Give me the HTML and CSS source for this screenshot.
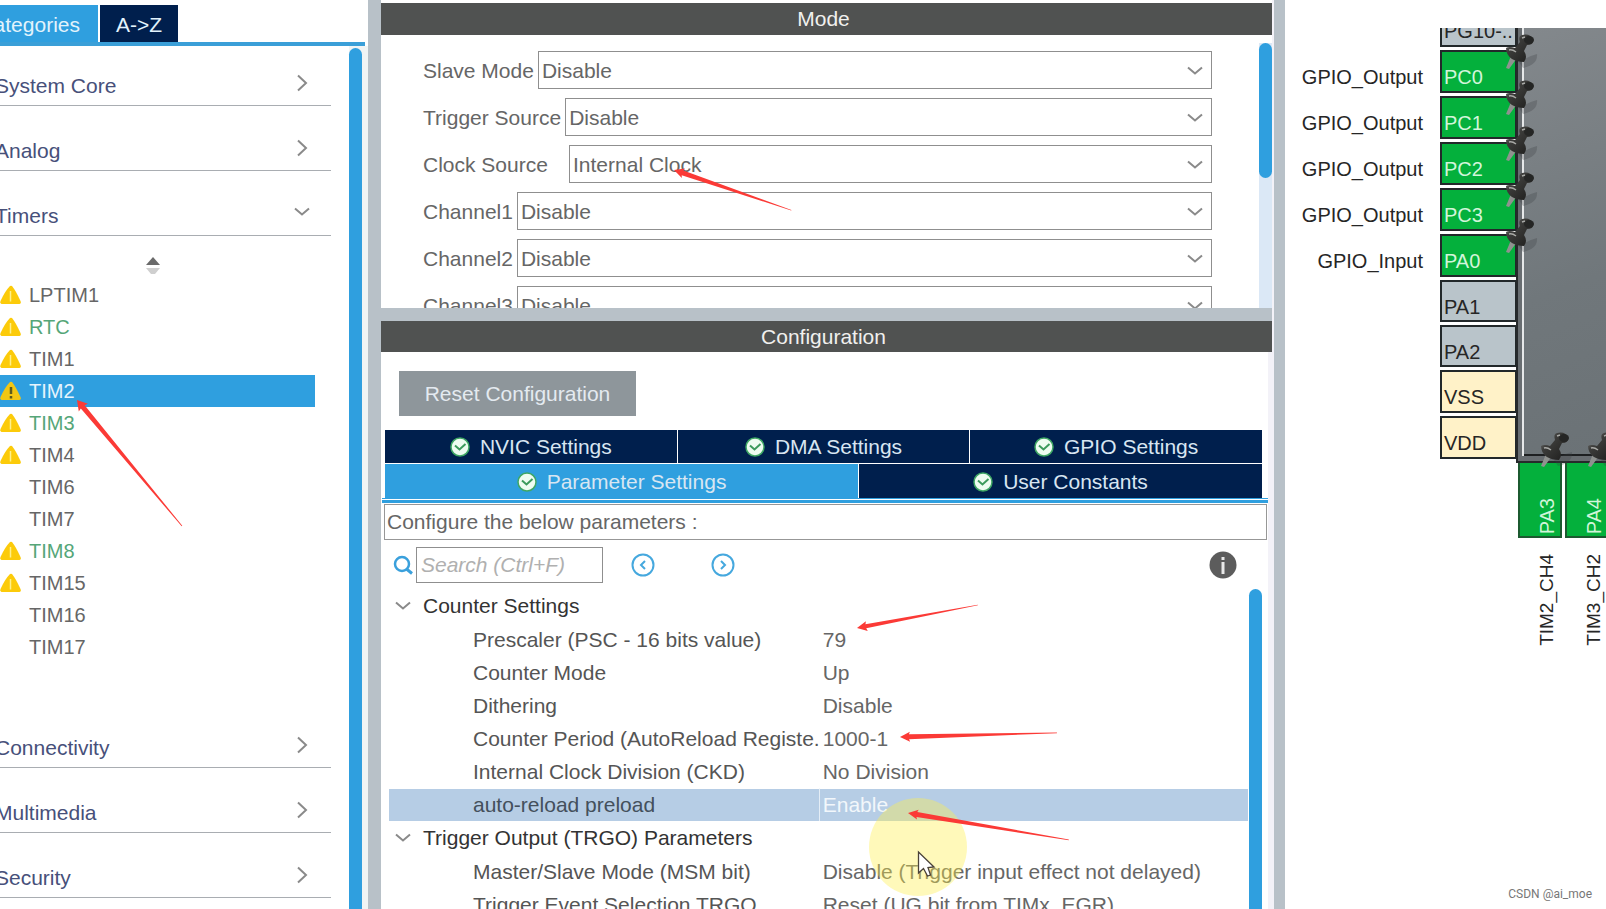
FILE: index.html
```html
<!DOCTYPE html>
<html lang="en">
<head>
<meta charset="utf-8">
<title>TIM2 Mode and Configuration</title>
<link rel="stylesheet" href="styles.css">
</head>
<body>
<svg class="defs" width="0" height="0" aria-hidden="true">
  <defs>
    <linearGradient id="pinHead" x1="0" y1="0" x2="1" y2="1">
      <stop offset="0" stop-color="#8a8a88"/><stop offset=".35" stop-color="#3c3c3a"/><stop offset="1" stop-color="#1c1c1b"/>
    </linearGradient>
    <symbol id="down" viewBox="0 0 18 12"><path d="M2 2.500L9 8.500L16 2.500" fill="none" stroke="#8a8a8a" stroke-width="2"/></symbol>
    <symbol id="right" viewBox="0 0 12 18"><path d="M2 1.500L10 9L2 16.500" fill="none" stroke="#8a8a8a" stroke-width="2"/></symbol>
    <symbol id="warn" viewBox="0 0 22 20"><path d="M10 1Q11 .4 12 1Q16 6 20.500 16Q21.500 18.500 19.500 19H1.500Q-.3 18.500 .5 16Q5 6 10 1Z" fill="#fccb0a"/><path d="M10.500 6V16.500" stroke="#fff08a" stroke-width="1.500"/></symbol>
    <symbol id="warn-dark" viewBox="0 0 22 20"><path d="M10 1Q11 .4 12 1Q16 6 20.500 16Q21.500 18.500 19.500 19H1.500Q-.3 18.500 .5 16Q5 6 10 1Z" fill="#f2c714"/><path d="M11 6V13M11 15V17.500" stroke="#5d5b1c" stroke-width="2.500"/></symbol>
    <symbol id="ok" viewBox="0 0 20 20"><circle cx="10" cy="10" r="9" fill="#eefcf1" stroke="#3fa765" stroke-width="1.500"/><path d="M5 8.500L9.500 12.500L15.500 7" fill="none" stroke="#3c9a5c" stroke-width="2"/></symbol>
    <symbol id="pushpin" viewBox="0 0 34 40">
      <path d="M14 30Q24 24 32 22Q33 33 18 36Z" fill="#3a3d3f" opacity=".28"/>
      <path d="M6 24L1 36L4 37L12 26Z" fill="#8f928f"/>
      <path d="M1 16Q4 14 10 16L15 10Q13 4 17 3Q25 1 28 7Q29 13 22 13L19 19Q23 25 19 30Q12 30 7 27Q1 23 1 16Z" fill="url(#pinHead)"/>
      <ellipse cx="24" cy="8" rx="5" ry="4" fill="#252625"/>
      <path d="M4 18Q7 17 11 20M17 6L20 5" stroke="#a9aaa7" stroke-width="1.500" fill="none"/>
    </symbol>
  </defs>
</svg>

<div class="app">
  <aside class="sidebar">
    <div class="view-tabs">
      <button class="view-tab active">Categories</button>
      <button class="view-tab dark">A-&gt;Z</button>
    </div>
    <div class="sidebar-body">
      <nav class="categories">
        <button class="category"><span>System Core</span><svg class="chev-r"><use href="#right"/></svg></button>
        <button class="category"><span>Analog</span><svg class="chev-r"><use href="#right"/></svg></button>
        <button class="category"><span>Timers</span><svg class="chev-d"><use href="#down"/></svg></button>
        <div class="timers">
          <svg class="sorter" viewBox="0 0 16 18"><path d="M8 0L15 8H1Z" fill="#6a6a6a"/><path d="M1 11H15L10 17H6Z" fill="#cfcfcf"/></svg>
          <ul class="periphs">
            <li><button class="periph"><svg><use href="#warn"/></svg>LPTIM1</button></li>
            <li><button class="periph used"><svg><use href="#warn"/></svg>RTC</button></li>
            <li><button class="periph"><svg><use href="#warn"/></svg>TIM1</button></li>
            <li><button class="periph selected"><svg><use href="#warn-dark"/></svg>TIM2</button></li>
            <li><button class="periph used"><svg><use href="#warn"/></svg>TIM3</button></li>
            <li><button class="periph"><svg><use href="#warn"/></svg>TIM4</button></li>
            <li><button class="periph"><svg></svg>TIM6</button></li>
            <li><button class="periph"><svg></svg>TIM7</button></li>
            <li><button class="periph used"><svg><use href="#warn"/></svg>TIM8</button></li>
            <li><button class="periph"><svg><use href="#warn"/></svg>TIM15</button></li>
            <li><button class="periph"><svg></svg>TIM16</button></li>
            <li><button class="periph"><svg></svg>TIM17</button></li>
          </ul>
        </div>
        <button class="category"><span>Connectivity</span><svg class="chev-r"><use href="#right"/></svg></button>
        <button class="category"><span>Multimedia</span><svg class="chev-r"><use href="#right"/></svg></button>
        <button class="category"><span>Security</span><svg class="chev-r"><use href="#right"/></svg></button>
      </nav>
      <div class="side-scroll"><div class="thumb"></div></div>
    </div>
  </aside>

  <main class="center">
    <section class="mode">
      <h2 class="bar">Mode</h2>
      <div class="mode-body">
        <div class="mode-rows">
          <div class="field"><label for="slave">Slave Mode</label><div class="combo"><select id="slave"><option>Disable</option></select><svg><use href="#down"/></svg></div></div>
          <div class="field"><label for="trig">Trigger Source</label><div class="combo"><select id="trig"><option>Disable</option></select><svg><use href="#down"/></svg></div></div>
          <div class="field"><label for="clock" class="wide">Clock Source</label><div class="combo"><select id="clock"><option>Internal Clock</option></select><svg><use href="#down"/></svg></div></div>
          <div class="field"><label for="ch1">Channel1</label><div class="combo"><select id="ch1"><option>Disable</option></select><svg><use href="#down"/></svg></div></div>
          <div class="field"><label for="ch2">Channel2</label><div class="combo"><select id="ch2"><option>Disable</option></select><svg><use href="#down"/></svg></div></div>
          <div class="field"><label for="ch3">Channel3</label><div class="combo"><select id="ch3"><option>Disable</option></select><svg><use href="#down"/></svg></div></div>
        </div>
        <div class="mode-scroll"><div class="thumb"></div></div>
      </div>
    </section>

    <section class="config">
      <h2 class="bar">Configuration</h2>
      <div class="config-body">
        <button class="reset">Reset Configuration</button>
        <div class="tabs">
          <div class="tab-row three">
            <button class="tab"><svg><use href="#ok"/></svg>NVIC Settings</button>
            <button class="tab"><svg><use href="#ok"/></svg>DMA Settings</button>
            <button class="tab"><svg><use href="#ok"/></svg>GPIO Settings</button>
          </div>
          <div class="tab-row two">
            <button class="tab active"><svg><use href="#ok"/></svg>Parameter Settings</button>
            <button class="tab"><svg><use href="#ok"/></svg>User Constants</button>
          </div>
        </div>
        <div class="tab-line"></div>
        <p class="hint">Configure the below parameters :</p>
        <div class="search">
          <label for="find" aria-label="Search"><svg class="lens" viewBox="0 0 20 20"><circle cx="9" cy="9" r="7" fill="none" stroke="#3aa0dc" stroke-width="2.500"/><path d="M13.500 14L19 18.500" stroke="#3aa0dc" stroke-width="3"/></svg></label>
          <input id="find" type="text" placeholder="Search (Ctrl+F)">
          <button class="step" aria-label="Previous"><svg viewBox="0 0 24 24"><circle cx="12" cy="12" r="10.500"/><path d="M14 8L10 12L14 16"/></svg></button>
          <button class="step next" aria-label="Next"><svg viewBox="0 0 24 24"><circle cx="12" cy="12" r="10.500"/><path d="M10 8L14 12L10 16"/></svg></button>
          <button class="info" aria-label="Information"><svg viewBox="0 0 28 28"><circle cx="14" cy="14" r="13.500" fill="#5c5c5c"/><path d="M14 6V9M14 11V23" stroke="#e8e8e8" stroke-width="3"/></svg></button>
        </div>
        <div class="params">
          <table class="tree">
            <colgroup><col class="name-col"><col></colgroup>
            <tbody>
              <tr class="group"><th colspan="2"><svg><use href="#down"/></svg>Counter Settings</th></tr>
              <tr><td>Prescaler (PSC - 16 bits value)</td><td>79</td></tr>
              <tr><td>Counter Mode</td><td>Up</td></tr>
              <tr><td>Dithering</td><td>Disable</td></tr>
              <tr><td>Counter Period (AutoReload Registe.</td><td>1000-1</td></tr>
              <tr><td>Internal Clock Division (CKD)</td><td>No Division</td></tr>
              <tr class="current"><td>auto-reload preload</td><td>Enable</td></tr>
              <tr class="group"><th colspan="2"><svg><use href="#down"/></svg>Trigger Output (TRGO) Parameters</th></tr>
              <tr><td>Master/Slave Mode (MSM bit)</td><td>Disable (Trigger input effect not delayed)</td></tr>
              <tr><td>Trigger Event Selection TRGO</td><td>Reset (UG bit from TIMx_EGR)</td></tr>
            </tbody>
          </table>
          <div class="param-scroll"></div>
        </div>
      </div>
    </section>
  </main>

  <section class="pinout">
    <div class="left-pins">
      <div class="pin-row"><span class="signal"></span><span class="pin">PG10-..</span></div>
      <div class="pin-row"><span class="signal">GPIO_Output</span><span class="pin on">PC0<svg class="pushpin"><use href="#pushpin"/></svg></span></div>
      <div class="pin-row"><span class="signal">GPIO_Output</span><span class="pin on">PC1<svg class="pushpin"><use href="#pushpin"/></svg></span></div>
      <div class="pin-row"><span class="signal">GPIO_Output</span><span class="pin on">PC2<svg class="pushpin"><use href="#pushpin"/></svg></span></div>
      <div class="pin-row"><span class="signal">GPIO_Output</span><span class="pin on">PC3<svg class="pushpin"><use href="#pushpin"/></svg></span></div>
      <div class="pin-row"><span class="signal">GPIO_Input</span><span class="pin on">PA0<svg class="pushpin"><use href="#pushpin"/></svg></span></div>
      <div class="pin-row idle"><span class="signal"></span><span class="pin">PA1</span></div>
      <div class="pin-row idle"><span class="signal"></span><span class="pin">PA2</span></div>
      <div class="pin-row"><span class="signal"></span><span class="pin power">VSS</span></div>
      <div class="pin-row"><span class="signal"></span><span class="pin power">VDD</span></div>
    </div>
    <div class="chip-side">
      <div class="chip"><div class="die"></div></div>
      <div class="bottom-pins">
        <div class="pin-col"><span class="pin on">PA3<svg class="pushpin"><use href="#pushpin"/></svg></span><span class="signal">TIM2_CH4</span></div>
        <div class="pin-col"><span class="pin on">PA4<svg class="pushpin"><use href="#pushpin"/></svg></span><span class="signal">TIM3_CH2</span></div>
      </div>
    </div>
  </section>
</div>

<svg class="marks" width="1606" height="909" viewBox="0 0 1606 909" aria-hidden="true">
  <circle cx="918" cy="847" r="49" fill="#fff04a" opacity=".38"/>
  <g fill="#fb3a36">
    <path transform="translate(77 400) rotate(50.200)" d="M0 0L10 -6L9 -2.500L164 -.4V.4L9 2.500L10 6Z"/>
    <path transform="translate(674 170) rotate(18.900)" d="M0 0L10 -5L9 -2.500L124 -.3V.3L9 2.500L10 5Z"/>
    <path transform="translate(857 628) rotate(-10.800)" d="M0 0L10 -5L9 -2L123 -.3V.3L9 2L10 5Z"/>
    <path transform="translate(900 737) rotate(-1.500)" d="M0 0L10 -5L9 -2.500L157 -.3V.3L9 2.500L10 5Z"/>
    <path transform="translate(908 813) rotate(9.500)" d="M0 0L10 -5L9 -2.500L163 -.3V.3L9 2.500L10 5Z"/>
  </g>
  <path d="M918.500 852V873L923.500 868.500L927.500 876L930.500 875L928 867.500L934 867Z" fill="#fff" stroke="#4a4238" stroke-width="1.300"/>
</svg>
<div class="credit">CSDN @ai_moe</div>
</body>
</html>
```
FILE: styles.css
```css
* { box-sizing: border-box; }

body {
  margin: 0;
  background: #fff;
  color: #666;
  font: 21px/24px "Liberation Sans", Arial, sans-serif;
}

button, input, select { font: inherit; color: inherit; border: 0; border-radius: 0; padding: 0; margin: 0; background: none; }
svg { flex: none; }
.defs { position: absolute; }

.app {
  display: grid;
  grid-template-columns: 381px minmax(0, 1fr) 334px;
  height: 100vh;
  overflow: hidden;
}

/* Category sidebar */
.sidebar {
  display: flex;
  flex-direction: column;
  min-height: 0;
  padding-top: 5px;
  border-right: 13px solid #b8c1c8;
  overflow: hidden;
}
.view-tabs {
  display: flex;
  gap: 2px;
  height: 41px;
  margin-right: 3px;
  border-bottom: 4px solid #3a9fd8;
}
.view-tab { width: 78px; padding-top: 2px; color: #e2f3fc; background: #001f4d; white-space: nowrap; }
.view-tab.active { display: flex; justify-content: flex-end; align-items: center; width: 98px; padding-right: 18px; background: #2f9fdf; }
.sidebar-body { display: flex; flex: 1; min-height: 0; }
.categories { flex: 1; min-width: 0; padding-right: 18px; overflow: hidden; }
.category {
  display: flex;
  justify-content: space-between;
  align-items: flex-end;
  width: 100%;
  height: 65px;
  padding: 0 20px 7px 0;
  border-bottom: 1px solid #a9adb2;
  color: #47507a;
}
.category:first-child { height: 60px; }
.category span { margin-left: -5px; }
.category .chev-r { width: 12px; height: 18px; margin: 0 3px 6px 0; }
.category .chev-d { width: 18px; height: 12px; margin: 0 0 10px; }
.timers { height: 467px; padding-top: 21px; }
.sorter { display: block; width: 16px; height: 18px; margin: 0 auto 4px 145px; }
.periphs { margin: 0; padding: 0; list-style: none; font-size: 20px; }
.periph {
  display: flex;
  align-items: center;
  gap: 7px;
  width: calc(100% - 16px);
  height: 32px;
  color: #666;
}
.periph svg { width: 22px; height: 20px; }
.periph.used { color: #55a678; }
.periph.selected { color: #e6f4fd; background: #2f9fdf; }
.side-scroll { width: 19px; padding-top: 2px; background: #f0f4f4; }
.side-scroll .thumb { width: 13px; height: 100%; border-radius: 7px 7px 0 0; background: #2f9fdf; }

/* Centre column */
.center {
  display: grid;
  grid-template-rows: 308px minmax(0, 1fr);
  min-width: 0;
  min-height: 0;
}
.bar {
  flex: none;
  margin: 0;
  padding-right: 6px;
  background: #505251;
  color: #f0f0ee;
  font-size: 21px;
  font-weight: 400;
  line-height: 31px;
  text-align: center;
}
.mode {
  display: flex;
  flex-direction: column;
  min-height: 0;
  padding-top: 3px;
  overflow: hidden;
}
.mode .bar { line-height: 32px; }
.mode-body { display: flex; flex: 1; min-height: 0; }
.mode-rows {
  display: flex;
  flex-direction: column;
  flex: 1;
  gap: 9px;
  min-width: 0;
  padding: 16px 47px 0 42px;
  overflow: hidden;
}
.field { display: flex; flex: none; align-items: center; gap: 4px; height: 38px; }
.field label { flex: none; padding-top: 2px; white-space: nowrap; }
.field label.wide { min-width: 142px; }
.combo { position: relative; flex: 1; height: 38px; }
.combo select {
  appearance: none;
  width: 100%;
  height: 100%;
  padding: 2px 36px 0 3px;
  border: 1px solid #8f8f8f;
  background: #fff;
}
.combo svg { position: absolute; right: 8px; top: 14px; width: 18px; height: 12px; pointer-events: none; }
.mode-scroll { width: 13px; margin-top: 8px; background: #dbe8f6; }
.mode-scroll .thumb { height: 51%; border-radius: 7px; background: #2f9fdf; }

.config {
  display: flex;
  flex-direction: column;
  min-height: 0;
  border-top: 13px solid #b8c1c8;
}
.config-body {
  display: flex;
  flex-direction: column;
  flex: 1;
  min-height: 0;
  border-right: 4px solid #f3f2f8;
}
.reset {
  flex: none;
  width: 237px;
  height: 45px;
  margin: 19px 0 14px 18px;
  background: #8e969b;
  color: #e4eaf0;
}
.tabs { display: grid; gap: 1px; margin: 0 6px 0 4px; }
.tab-row { display: grid; gap: 1px; }
.tab-row.three { grid-template-columns: 1fr 1fr 1fr; }
.tab-row.two { grid-template-columns: 54fr 46fr; }
.tab {
  display: flex;
  justify-content: center;
  align-items: center;
  gap: 10px;
  height: 33px;
  padding-top: 1px;
  background: #001f4d;
  color: #d8e6f2;
}
.two .tab { height: 34px; }
.tab.active { background: #2f9fdf; }
.tab svg { width: 20px; height: 20px; }
.tab-line { flex: none; height: 5px; margin-left: 1px; border: solid #2f9fdf; border-width: 1px 0 3px; }
.hint {
  flex: none;
  height: 36px;
  margin: 1px 1px 0 3px;
  padding: 0 2px;
  border: 1px solid #979797;
  line-height: 34px;
}
.search { display: flex; flex: none; align-items: center; height: 36px; margin: 7px 0 6px 12px; }
.lens { display: block; width: 20px; height: 20px; margin-right: 3px; }
.search input { width: 187px; height: 36px; padding: 0 4px; border: 1px solid #8f8f8f; }
.search input::placeholder { color: #b0b0b0; font-style: italic; opacity: 1; }
.step { height: 24px; margin-left: 28px; }
.step.next { margin-left: 56px; }
.step svg { display: block; width: 24px; height: 24px; fill: none; stroke: #45a8de; stroke-width: 2; }
.info { margin: 0 31px 0 auto; }
.info svg { display: block; width: 28px; height: 28px; }

.params { display: flex; flex: 1; min-height: 0; margin: 0 6px 0 8px; overflow: hidden; }
.param-scroll { flex: none; width: 13px; height: 100%; border-radius: 7px 7px 0 0; background: #2f9fdf; }
.tree {
  flex: 1;
  min-width: 0;
  height: max-content;
  margin-right: 1px;
  table-layout: fixed;
  border-collapse: separate;
  border-spacing: 0;
  color: #666;
}
.name-col { width: 428px; }
.tree td { height: 33px; padding: 0 0 0 3px; border-top: 1px solid #fff; white-space: nowrap; line-height: 32px; }
.tree td:first-child { padding-left: 84px; color: #555; }
.tree .current td { background: #b6cde5; color: #f2f7fb; }
.tree .current td:first-child { border-right: 1px solid #e4edf6; color: #44505c; }
.tree th { height: 34px; padding: 0; color: #333; font-weight: 400; text-align: left; line-height: 33px; vertical-align: top; }
.tree th svg { width: 18px; height: 12px; margin: 0 11px 2px 5px; vertical-align: middle; }

/* Pinout canvas */
.pinout {
  display: flex;
  min-width: 0;
  padding-top: 28px;
  border-left: 2px solid #f3f2f8;
  box-shadow: inset 11px 0 #b8c1c8;
  color: #262626;
  font-size: 20px;
  overflow: hidden;
}
.left-pins { display: flex; flex: none; flex-direction: column; gap: 3px; width: 242px; }
.pin-row { display: flex; justify-content: flex-end; gap: 17px; height: 43px; }
.pin-row.idle { height: 42px; }
.pin-row:first-child { height: 19px; overflow: hidden; align-items: flex-end; }
.pin-row .signal { padding-top: 15px; }
.pin-row .pin {
  position: relative;
  width: 76px;
  height: 43px;
  padding: 13px 0 0 2px;
  border: 2px solid #22282a;
  border-right-width: 1px;
  background: #b9c4ca;
}
.pin-row.idle .pin { height: 42px; }
.pin-row .pin.power { background: #fff2c8; }
.pin-row .pin.on, .pin-col .pin.on { background: #04b03c; color: #d2f5da; }
.pushpin { position: absolute; z-index: 1; width: 34px; height: 40px; }
.pin-row .pushpin { left: 63px; top: -20px; }
.chip-side { flex: 1; min-width: 0; }
.chip { height: 435px; padding: 0 0 5px 4px; border: solid #26292b; border-width: 0 0 2px 2px; background: #686d71; }
.die {
  height: 100%;
  border: solid #e6e8e9;
  border-width: 0 0 0 2px;
  box-shadow: inset 0 -2px #1e2022;
  background: linear-gradient(160deg, #83888c, #70777b 60%, #6b7276);
}
.bottom-pins { display: flex; gap: 3px; padding-left: 2px; }
.pin-col { flex: none; width: 44px; }
.pin-col .pin, .pin-col .signal { writing-mode: sideways-lr; }
.pin-col .pin {
  position: relative;
  display: flex;
  justify-content: flex-start;
  align-items: flex-start;
  width: 44px;
  height: 75px;
  padding: 0 0 2px 15px;
  border: 2px solid #1c5a30;
  border-top: 0;
}
.pin-col .signal { display: block; height: 108px; padding: 0 0 0 17px; font-size: 19px; }
.pin-col .pushpin { left: 20px; top: -33px; }

/* Overlays */
.marks { position: absolute; left: 0; top: 0; z-index: 2; pointer-events: none; }
.credit { position: absolute; right: 14px; bottom: 6px; color: #777; font: 12px/18px Roboto, sans-serif; }
```
